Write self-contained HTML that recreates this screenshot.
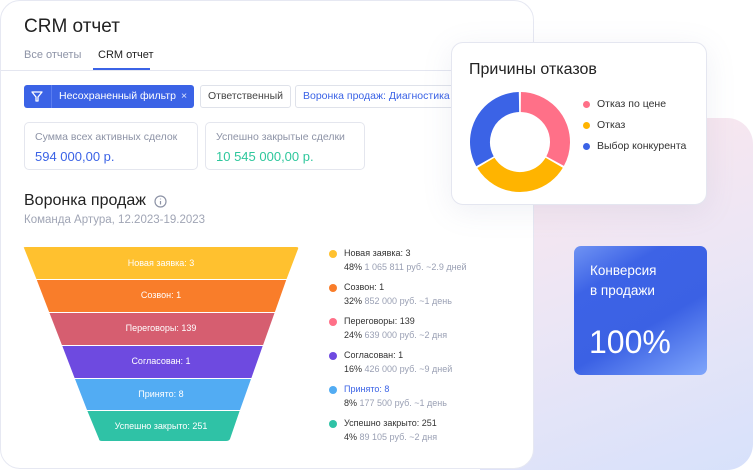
<!DOCTYPE html>
<html><head><meta charset="utf-8"><style>
*{margin:0;padding:0;box-sizing:border-box}
body{width:753px;height:470px;background:#fff;font-family:"Liberation Sans","Noto Sans CJK SC",sans-serif;position:relative;overflow:hidden;color:#2b2d33}
.abs{position:absolute}
.bg{left:480px;top:118px;width:273px;height:352px;border-radius:0 26px 26px 0;background:linear-gradient(160deg,#fde7ec 0%,#ece6f5 50%,#d7e1fb 100%)}
.main{left:0;top:0;width:534px;height:469px;background:#fff;border:1px solid #e6e8f2;border-radius:20px}
.chip{border:1px solid #dfe2ea;border-radius:3px;height:23px;font-size:10.5px;line-height:21px;padding:0 7px;background:#fff;white-space:nowrap}
.stat{border:1px solid #e4e6ee;border-radius:5px;height:48px}
.stat .l{font-size:10.5px;color:#8d93a6;position:absolute;left:10px;top:8px;white-space:nowrap}
.stat .v{font-size:13px;position:absolute;left:10px;top:26px}
.lg{font-size:9px;position:absolute;left:343px;white-space:nowrap}
.lg b{font-weight:normal;color:#333}
.lg span{color:#9aa0b4}
.dot{position:absolute;left:328px;width:8px;height:8px;border-radius:50%}
</style></head><body>
<div class="abs bg"></div>
<div class="abs main">
<div class="abs" style="left:23px;top:15px;font-size:19px;color:#222">CRM отчет</div>
<div class="abs" style="left:23px;top:48px;font-size:11px;color:#8d93a6">Все отчеты</div>
<div class="abs" style="left:97px;top:48px;font-size:11px;color:#222">CRM отчет</div>
<div class="abs" style="left:92px;top:67px;width:57px;height:2px;background:#3b63e6"></div>
<div class="abs" style="left:0;top:69px;width:532px;height:1px;background:#e4e6f0"></div>
<div class="abs" style="left:23px;top:84px;width:170px;height:23px;background:#3b63e6;border-radius:3px;color:#fff;font-size:10.5px;line-height:23px;white-space:nowrap">
<svg class="abs" style="left:7px;top:6px" width="12" height="11" viewBox="0 0 12 11"><path d="M1 1h10L7 6v4H5V6z" fill="none" stroke="#fff" stroke-width="1.3" stroke-linejoin="round"/></svg>
<div class="abs" style="left:27px;top:0;width:1px;height:23px;background:#5a7df0"></div>
<span class="abs" style="left:35px">Несохраненный фильтр</span><span class="abs" style="left:157px;color:#dfe6ff">×</span></div>
<div class="abs chip" style="left:199px;top:84px;color:#444">Ответственный</div>
<div class="abs chip" style="left:294px;top:84px;width:170px;color:#3b63e6">Воронка продаж: Диагностика</div>
<div class="abs stat" style="left:23px;top:121px;width:174px"><div class="l">Сумма всех активных сделок</div><div class="v" style="color:#3b63e6">594 000,00 р.</div></div>
<div class="abs stat" style="left:204px;top:121px;width:160px"><div class="l">Успешно закрытые сделки</div><div class="v" style="color:#2ec79c">10 545 000,00 р.</div></div>
<div class="abs" style="left:23px;top:191px;font-size:16px;color:#222">Воронка продаж</div>
<svg class="abs" style="left:153px;top:194px" width="13" height="13" viewBox="0 0 13 13"><circle cx="6.5" cy="6.5" r="5.5" fill="none" stroke="#8d93a6" stroke-width="1.2"/><path d="M6.5 6v3.5M6.5 3.6v.8" stroke="#8d93a6" stroke-width="1.2"/></svg>
<div class="abs" style="left:23px;top:213px;font-size:11.5px;color:#a0a5b5">Команда Артура, 12.2023-19.2023</div>
<svg class="abs" style="left:-1px;top:-1px" width="330" height="460">
<path d="M24 248Q23 247 26 247H296Q299 247 298 249L286.6 279H36.4Z" fill="#ffc12f"/>
<path d="M36.8 280H286.2L274.9 312H49.1Z" fill="#f97d2a"/>
<path d="M49.5 313H274.5L263.1 345H61.9Z" fill="#d65e70"/>
<path d="M62.3 346H262.7L251.4 378H74.6Z" fill="#6e4ae0"/>
<path d="M75 379H251L240 410H87Z" fill="#52acf3"/>
<path d="M87.4 411H239.6L230 439Q229 441 226 441H102Q99 441 99 439Z" fill="#2fc2a6"/>
<g fill="#fff" font-size="9" text-anchor="middle" font-family="Liberation Sans,sans-serif">
<text x="161" y="266">Новая заявка:  3</text>
<text x="161" y="298">Созвон:  1</text>
<text x="161" y="331">Переговоры:  139</text>
<text x="161" y="364">Согласован:  1</text>
<text x="161" y="397">Принято:  8</text>
<text x="161" y="429">Успешно закрыто:  251</text></g>
</svg>
<div class="dot" style="top:249px;background:#ffc12f"></div><div class="lg" style="top:247px"><b>Новая заявка: 3</b></div><div class="lg" style="top:261px"><b>48%</b> <span>1 065 811 руб.  ~2.9 дней</span></div>
<div class="dot" style="top:283px;background:#f97d2a"></div><div class="lg" style="top:281px"><b>Созвон: 1</b></div><div class="lg" style="top:295px"><b>32%</b> <span>852 000 руб.  ~1 день</span></div>
<div class="dot" style="top:317px;background:#ff7088"></div><div class="lg" style="top:315px"><b>Переговоры: 139</b></div><div class="lg" style="top:329px"><b>24%</b> <span>639 000 руб.  ~2 дня</span></div>
<div class="dot" style="top:351px;background:#6e4ae0"></div><div class="lg" style="top:349px"><b>Согласован: 1</b></div><div class="lg" style="top:363px"><b>16%</b> <span>426 000 руб.  ~9 дней</span></div>
<div class="dot" style="top:385px;background:#52acf3"></div><div class="lg" style="top:383px"><b style="color:#3b63e6">Принято: 8</b></div><div class="lg" style="top:397px"><b>8%</b> <span>177 500 руб.  ~1 день</span></div>
<div class="dot" style="top:419px;background:#2fc2a6"></div><div class="lg" style="top:417px"><b>Успешно закрыто: 251</b></div><div class="lg" style="top:431px"><b>4%</b> <span>89 105 руб.  ~2 дня</span></div>
</div>
<div class="abs" style="left:451px;top:42px;width:256px;height:163px;background:#fff;border:1px solid #e4e6f0;border-radius:12px;box-shadow:0 6px 30px rgba(120,130,170,.12)">
<div class="abs" style="left:17px;top:18px;font-size:16px;color:#222">Причины отказов</div>
<svg class="abs" style="left:15px;top:46px" width="106" height="106" viewBox="-53 -53 106 106">
<g fill="none" stroke-width="20">
<circle r="40" stroke="#ff7088" stroke-dasharray="82 300" transform="rotate(-89)"/>
<circle r="40" stroke="#ffb400" stroke-dasharray="82 300" transform="rotate(31)"/>
<circle r="40" stroke="#3b63e6" stroke-dasharray="82 300" transform="rotate(151)"/>
</g>
<g stroke="#fff" stroke-width="1.5"><line x1="0" y1="-28" x2="0" y2="-52"/><line x1="24" y1="14" x2="45" y2="26"/><line x1="-24" y1="14" x2="-45" y2="26"/></g>
</svg>
<div class="abs" style="left:131px;top:58px;width:7px;height:7px;border-radius:50%;background:#ff7088"></div><div class="abs" style="left:145px;top:55px;font-size:10.5px;color:#333">Отказ по цене</div>
<div class="abs" style="left:131px;top:79px;width:7px;height:7px;border-radius:50%;background:#ffb400"></div><div class="abs" style="left:145px;top:76px;font-size:10.5px;color:#333">Отказ</div>
<div class="abs" style="left:131px;top:100px;width:7px;height:7px;border-radius:50%;background:#3b63e6"></div><div class="abs" style="left:145px;top:97px;font-size:10.5px;color:#333">Выбор конкурента</div>
</div>
<div class="abs" style="left:574px;top:246px;width:133px;height:129px;border-radius:7px;background:linear-gradient(150deg,#6f93f3 0%,#3d63e6 25%,#3b61e4 60%,#7fa6fb 100%);color:#fff">
<div class="abs" style="left:16px;top:15px;font-size:13.5px;line-height:20px">Конверсия<br>в продажи</div>
<div class="abs" style="left:15px;top:78px;font-size:32px">100%</div>
</div>
</body></html>
